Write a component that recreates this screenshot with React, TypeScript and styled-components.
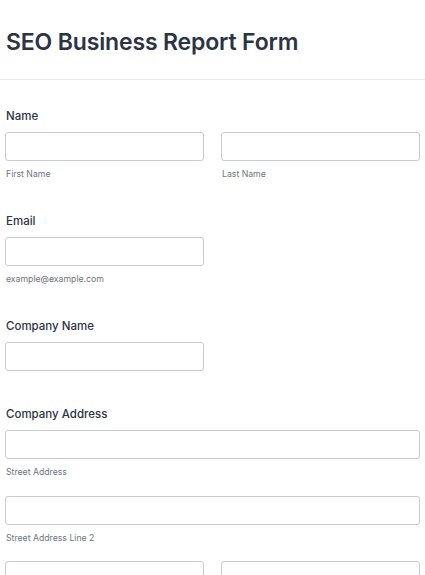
import React from "react";
import styled, { createGlobalStyle } from "styled-components";

const GlobalStyle = createGlobalStyle`
  html, body {
    margin: 0;
    padding: 0;
    background: #ffffff;
  }
  body {
    font-family: Inter, "Noto Sans", "Liberation Sans", sans-serif;
    color: #2c3345;
  }
  * {
    box-sizing: border-box;
  }
`;

const Page = styled.div`
  width: 100%;
  background: #ffffff;
`;

const Header = styled.header`
  padding: 28px 5px 22px;
  border-bottom: 1px solid #e4e6ec;
`;

const Title = styled.h1`
  margin: 0;
  padding-left: 1px;
  font-size: 23px;
  line-height: 29px;
  font-weight: 600;
  letter-spacing: -0.15px;
  color: #2c3345;
`;

const Form = styled.form`
  display: flex;
  flex-direction: column;
  padding: 27px 5px 0;
`;

const Field = styled.div<{ $spacing: number }>`
  display: flex;
  flex-direction: column;
  padding-bottom: ${(p) => p.$spacing}px;
`;

const Label = styled.label`
  padding-left: 1px;
  font-size: 11.5px;
  line-height: 18px;
  font-weight: 500;
  color: #2c3345;
  margin-bottom: 7px;
`;

const Row = styled.div`
  display: grid;
  grid-template-columns: 1fr 1fr;
  column-gap: 17px;
`;

const Stack = styled.div`
  display: flex;
  flex-direction: column;
  gap: 16px;
`;

const Cell = styled.div<{ $half?: boolean }>`
  display: flex;
  flex-direction: column;
  width: ${(p) => (p.$half ? "calc((100% - 17px) / 2)" : "100%")};
`;

const Input = styled.input`
  width: 100%;
  height: 29px;
  margin: 0;
  padding: 0 8px;
  border: 1px solid #c9ccd7;
  border-radius: 3px;
  background: #ffffff;
  font-family: inherit;
  font-size: 11px;
  color: #2c3345;
  outline: none;
`;

const SubLabel = styled.span`
  margin-top: 7px;
  padding-left: 1px;
  font-size: 8.7px;
  line-height: 13.5px;
  color: #6f7482;
`;

type CellProps = { sub?: string; half?: boolean };

const InputCell: React.FC<CellProps> = ({ sub, half }) => (
  <Cell $half={half}>
    <Input type="text" />
    {sub && <SubLabel>{sub}</SubLabel>}
  </Cell>
);

export default function App() {
  return (
    <Page>
      <GlobalStyle />
      <Header>
        <Title>SEO Business Report Form</Title>
      </Header>
      <Form onSubmit={(e) => e.preventDefault()}>
        <Field $spacing={30}>
          <Label>Name</Label>
          <Row>
            <InputCell sub="First Name" />
            <InputCell sub="Last Name" />
          </Row>
        </Field>

        <Field $spacing={31}>
          <Label>Email</Label>
          <InputCell half sub="example@example.com" />
        </Field>

        <Field $spacing={34}>
          <Label>Company Name</Label>
          <InputCell half />
        </Field>

        <Field $spacing={30}>
          <Label>Company Address</Label>
          <Stack>
            <InputCell sub="Street Address" />
            <InputCell sub="Street Address Line 2" />
            <Row>
              <InputCell sub="City" />
              <InputCell sub="State / Province" />
            </Row>
          </Stack>
        </Field>
      </Form>
    </Page>
  );
}
